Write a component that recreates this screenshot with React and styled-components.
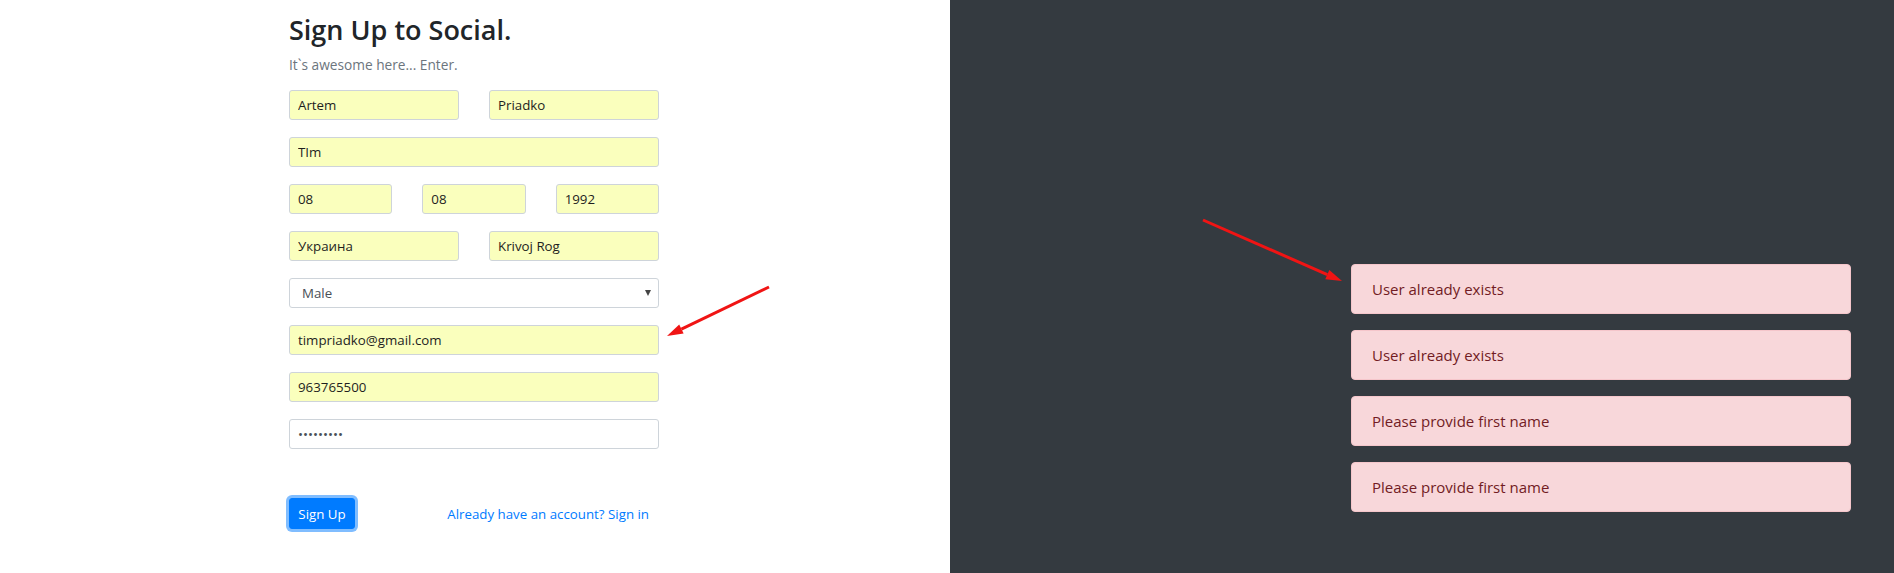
import React from "react";
import styled, { createGlobalStyle } from "styled-components";

const GlobalStyle = createGlobalStyle`
  html, body { margin: 0; padding: 0; }
  body { font-family: "Open Sans", "Noto Sans", sans-serif; }
  * { box-sizing: border-box; }
`;

const Page = styled.div`
  position: relative;
  display: flex;
  min-height: 100vh;
`;

const LeftPane = styled.section`
  flex: none;
  width: 950px;
  background: #fff;
  padding-left: 289px;
`;

const Form = styled.form`
  width: 370px;
  display: flex;
  flex-direction: column;
  padding-top: 14px;
`;

const Heading = styled.h3`
  margin: 0;
  font-size: 27px;
  font-weight: 600;
  line-height: 32px;
  color: #212529;
`;

const Subtitle = styled.p`
  margin: 9px 0 0;
  font-size: 13.7px;
  line-height: 20px;
  color: #6c757d;
`;

const Fields = styled.div`
  margin-top: 15px;
  display: flex;
  flex-direction: column;
  gap: 17px;
`;

const Row = styled.div`
  display: grid;
  grid-template-columns: repeat(${(p) => p.$cols || 1}, 1fr);
  column-gap: 30px;
`;

const Input = styled.input`
  width: 100%;
  height: 30px;
  padding: 0 8px;
  border: 1px solid #ced4da;
  border-radius: 3px;
  background: ${(p) => (p.$filled ? "#faffbd" : "#fff")};
  color: ${(p) => (p.$filled ? "#1e1e1e" : "#495057")};
  font-family: inherit;
  font-size: 13.3px;
  outline: none;
`;

const SelectWrap = styled.div`
  position: relative;
  &::after {
    content: "";
    position: absolute;
    right: 8px;
    top: 12px;
    border-left: 3.5px solid transparent;
    border-right: 3.5px solid transparent;
    border-top: 6px solid #444;
    pointer-events: none;
  }
`;

const Select = styled.select`
  appearance: none;
  width: 100%;
  height: 30px;
  padding: 0 12px;
  border: 1px solid #ced4da;
  border-radius: 3px;
  background: #fff;
  color: #495057;
  font-family: inherit;
  font-size: 13.3px;
  outline: none;
`;

const Footer = styled.div`
  margin-top: 49px;
  display: flex;
  align-items: center;
  justify-content: space-between;
`;

const Button = styled.button`
  height: 31px;
  width: 66px;
  padding: 0;
  border: 1px solid #007bff;
  border-radius: 3px;
  background: #007bff;
  color: #fff;
  font-family: inherit;
  font-size: 13.3px;
  box-shadow: 0 0 0 3px #80bdff;
`;

const Link = styled.a`
  margin-right: 10px;
  color: #007bff;
  font-size: 13.3px;
  text-decoration: none;
`;

const RightPane = styled.section`
  flex: 1;
  background: #343a40;
  padding: 264px 0 0 401px;
  display: flex;
  flex-direction: column;
  align-items: flex-start;
  gap: 16px;
`;

const Alert = styled.div`
  width: 500px;
  height: 50px;
  padding: 12px 20px;
  border: 1px solid #f5c6cb;
  border-radius: 4px;
  background: #f8d7da;
  color: #721c24;
  font-size: 15px;
  line-height: 24px;
`;

const Overlay = styled.svg`
  position: absolute;
  left: 0;
  top: 0;
  width: 100%;
  height: 100%;
  pointer-events: none;
`;

const alerts = [
  "User already exists",
  "User already exists",
  "Please provide first name",
  "Please provide first name",
];

export default function App() {
  return (
    <>
      <GlobalStyle />
      <Page>
        <LeftPane>
          <Form onSubmit={(e) => e.preventDefault()}>
            <Heading>Sign Up to Social.</Heading>
            <Subtitle>It`s awesome here... Enter.</Subtitle>
            <Fields>
              <Row $cols={2}>
                <Input $filled defaultValue="Artem" />
                <Input $filled defaultValue="Priadko" />
              </Row>
              <Row>
                <Input $filled defaultValue="TIm" />
              </Row>
              <Row $cols={3}>
                <Input $filled defaultValue="08" />
                <Input $filled defaultValue="08" />
                <Input $filled defaultValue="1992" />
              </Row>
              <Row $cols={2}>
                <Input $filled defaultValue="Украина" />
                <Input $filled defaultValue="Krivoj Rog" />
              </Row>
              <Row>
                <SelectWrap>
                  <Select defaultValue="male">
                    <option value="male">Male</option>
                    <option value="female">Female</option>
                  </Select>
                </SelectWrap>
              </Row>
              <Row>
                <Input $filled defaultValue="timpriadko@gmail.com" />
              </Row>
              <Row>
                <Input $filled defaultValue="963765500" />
              </Row>
              <Row>
                <Input type="password" defaultValue="123456789" />
              </Row>
            </Fields>
            <Footer>
              <Button type="submit">Sign Up</Button>
              <Link href="#">Already have an account? Sign in</Link>
            </Footer>
          </Form>
        </LeftPane>
        <RightPane>
          {alerts.map((a, i) => (
            <Alert key={i}>{a}</Alert>
          ))}
        </RightPane>
        <Overlay viewBox="0 0 1894 573" preserveAspectRatio="none">
          <line x1="769" y1="287" x2="681.4" y2="329.1" stroke="#f01414" strokeWidth="3" />
          <polygon points="667,336 679.2,324.6 683.6,333.6" fill="#f01414" />
          <line x1="1203" y1="220" x2="1327.3" y2="274.6" stroke="#f01414" strokeWidth="3" />
          <polygon points="1342,281 1325.3,279.2 1329.3,270.0" fill="#f01414" />
        </Overlay>
      </Page>
    </>
  );
}
